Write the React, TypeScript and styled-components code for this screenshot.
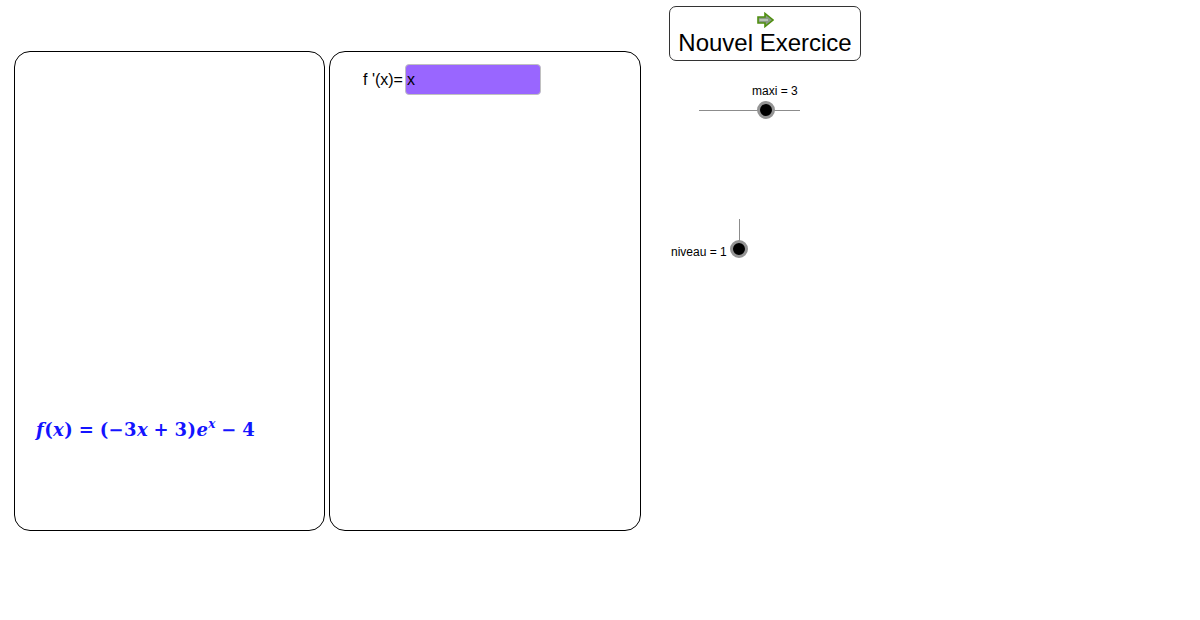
import styled, { createGlobalStyle } from 'styled-components';

const GlobalStyle = createGlobalStyle`
  html, body {
    margin: 0;
    background: #ffffff;
    font-family: 'Liberation Sans', Arial, sans-serif;
    color: #000000;
  }
`;

const Page = styled.div`
  display: flex;
  align-items: flex-start;
  width: 1200px;
  height: 620px;
  padding-left: 14px;
  box-sizing: border-box;
  overflow: hidden;
`;

const Panels = styled.div`
  display: flex;
  gap: 4px;
  margin-top: 51px;
`;

const Panel = styled.div`
  width: 312px;
  height: 480px;
  box-sizing: border-box;
  border: 1px solid #000000;
  border-radius: 16px;
  display: flex;
  flex-direction: column;
`;

const FormulaPanel = styled(Panel)`
  width: 311px;
  justify-content: flex-end;
  padding: 0 0 88px 21px;
`;

const Formula = styled.div`
  font-family: 'DejaVu Serif', 'Liberation Serif', serif;
  font-size: 18px;
  line-height: 24px;
  font-weight: 700;
  letter-spacing: 0.4px;
  color: #1414ff;
  white-space: nowrap;
  display: flex;
  align-items: baseline;
`;

const MathVar = styled.i`
  font-style: italic;
`;

const Operator = styled.span`
  margin: 0 5.5px;
`;

const Sup = styled.sup`
  font-size: 12px;
  font-style: italic;
  line-height: 0;
  position: relative;
  top: -8px;
  vertical-align: baseline;
`;

const AnswerRow = styled.div`
  display: flex;
  align-items: flex-start;
  gap: 2px;
  padding: 12px 0 0 33px;
`;

const AnswerLabel = styled.span`
  font-size: 16px;
  line-height: 32px;
`;

const AnswerInput = styled.div`
  width: 136px;
  height: 31px;
  box-sizing: border-box;
  background: #9966ff;
  border: 1px solid #c0c0c0;
  border-radius: 4px;
  padding-left: 1px;
  font-size: 16px;
  line-height: 30px;
`;

const SideColumn = styled.div`
  margin-left: 28px;
  margin-top: 6px;
  width: 192px;
  display: flex;
  flex-direction: column;
`;

const ExerciseButton = styled.button`
  width: 192px;
  height: 55px;
  padding: 5px 0 0;
  box-sizing: border-box;
  background: #ffffff;
  border: 1px solid #333333;
  border-radius: 7px;
  font-family: inherit;
  font-size: 24px;
  color: #000000;
  display: flex;
  flex-direction: column;
  align-items: center;
  line-height: 28px;
  white-space: nowrap;
`;

const ButtonIcon = styled.svg`
  width: 17px;
  height: 16px;
  display: block;
  margin-bottom: 1px;
`;

const SliderLabel = styled.span`
  font-size: 12px;
  line-height: 14px;
  white-space: nowrap;
`;

const MaxiBlock = styled.div`
  margin-top: 23px;
  margin-left: 30px;
  width: 101px;
  display: flex;
  flex-direction: column;
`;

const MaxiLabel = styled(SliderLabel)`
  padding-left: 53px;
`;

const HorizontalTrack = styled.div`
  position: relative;
  height: 1px;
  margin-top: 12px;
  background: #8c8c8c;
`;

const Knob = styled.div`
  position: absolute;
  width: 18px;
  height: 18px;
  box-sizing: border-box;
  border-radius: 50%;
  background: #000000;
  border: 3px solid #949494;
`;

const MaxiKnob = styled(Knob)`
  left: 58px;
  top: -9px;
`;

const NiveauBlock = styled.div`
  margin-top: 108px;
  margin-left: 2px;
  display: flex;
  align-items: flex-end;
  gap: 12px;
`;

const NiveauLabel = styled(SliderLabel)`
  margin-bottom: -9px;
`;

const VerticalTrack = styled.div`
  position: relative;
  width: 1px;
  height: 31px;
  background: #8c8c8c;
`;

const NiveauKnob = styled(Knob)`
  left: -9px;
  bottom: -8px;
`;

export default function App() {
  return (
    <>
      <GlobalStyle />
      <Page>
        <Panels>
          <FormulaPanel>
            <Formula>
              <MathVar>f</MathVar>(<MathVar>x</MathVar>)<Operator>=</Operator>(−3
              <MathVar>x</MathVar>
              <Operator>+</Operator>3)<MathVar>e</MathVar>
              <Sup>x</Sup>
              <Operator>−</Operator>4
            </Formula>
          </FormulaPanel>
          <Panel>
            <AnswerRow>
              <AnswerLabel>f '(x)=</AnswerLabel>
              <AnswerInput>x</AnswerInput>
            </AnswerRow>
          </Panel>
        </Panels>
        <SideColumn>
          <ExerciseButton>
            <ButtonIcon viewBox="0 0 17 16">
              <path
                d="M1 5 H8 V1.5 L16 8 L8 14.5 V11 H1 Z"
                fill="#8a9a86"
                stroke="#4f8f0f"
                strokeWidth="1.6"
              />
              <path d="M2.5 7 H11 V9 H2.5 Z" fill="#b8c4b4" />
            </ButtonIcon>
            Nouvel Exercice
          </ExerciseButton>
          <MaxiBlock>
            <MaxiLabel>maxi = 3</MaxiLabel>
            <HorizontalTrack>
              <MaxiKnob />
            </HorizontalTrack>
          </MaxiBlock>
          <NiveauBlock>
            <NiveauLabel>niveau = 1</NiveauLabel>
            <VerticalTrack>
              <NiveauKnob />
            </VerticalTrack>
          </NiveauBlock>
        </SideColumn>
      </Page>
    </>
  );
}
